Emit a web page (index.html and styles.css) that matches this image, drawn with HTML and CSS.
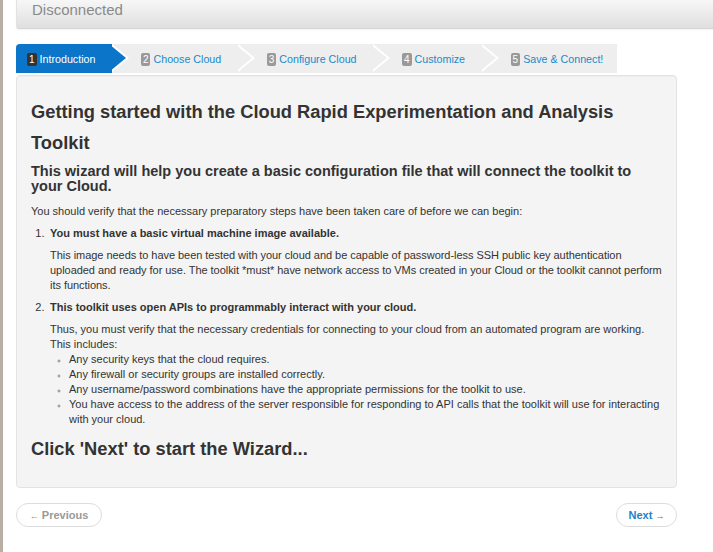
FILE: index.html
```
<!DOCTYPE html>
<html>
<head>
<meta charset="utf-8">
<link rel="stylesheet" href="styles.css">
</head>
<body>
<div class="page">
  <div class="topbar"><span class="status">Disconnected</span></div>
  <ul class="steps">
    <li class="step active"><span class="badge">1</span>Introduction</li>
    <li class="step"><span class="badge">2</span>Choose Cloud</li>
    <li class="step"><span class="badge">3</span>Configure Cloud</li>
    <li class="step"><span class="badge">4</span>Customize</li>
    <li class="step last"><span class="badge">5</span>Save &amp; Connect!</li>
  </ul>
  <div class="well">
    <h3>Getting started with the Cloud Rapid Experimentation and Analysis Toolkit</h3>
    <h4>This wizard will help you create a basic configuration file that will connect the toolkit to your Cloud.</h4>
    <p class="lead">You should verify that the necessary preparatory steps have been taken care of before we can begin:</p>
    <ol class="reqs">
      <li>
        <strong>You must have a basic virtual machine image available.</strong>
        <p class="snug">This image needs to have been tested with your cloud and be capable of password-less SSH public key authentication uploaded and ready for use. The toolkit *must* have network access to VMs created in your Cloud or the toolkit cannot perform its functions.</p>
      </li>
      <li>
        <strong>This toolkit uses open APIs to programmably interact with your cloud.</strong>
        <p class="tight">Thus, you must verify that the necessary credentials for connecting to your cloud from an automated program are working. This includes:</p>
        <ul class="subs">
          <li>Any security keys that the cloud requires.</li>
          <li>Any firewall or security groups are installed correctly.</li>
          <li>Any username/password combinations have the appropriate permissions for the toolkit to use.</li>
          <li>You have access to the address of the server responsible for responding to API calls that the toolkit will use for interacting with your cloud.</li>
        </ul>
      </li>
    </ol>
    <h3 class="cta">Click 'Next' to start the Wizard...</h3>
  </div>
  <div class="actions">
    <button class="btn prev"><span class="arr">&larr;</span> Previous</button>
    <button class="btn next">Next <span class="arr">&rarr;</span></button>
  </div>
</div>
</body>
</html>
```
FILE: styles.css
```
html, body {
  margin: 0;
  padding: 0;
  background: #fff;
}
body {
  font-family: "Liberation Sans", Arial, sans-serif;
  font-size: 11px;
  line-height: 15px;
  color: #333;
}
.page {
  border-left: 3px solid #b8aea3;
  min-height: 552px;
  box-sizing: border-box;
  padding-left: 13px;
  width: 713px;
}
.topbar {
  height: 28px;
  background: linear-gradient(#f7f7f7, #dfdfdf);
  border-bottom: 1px solid #d6d6d6;
  border-left: 1px solid #e2e2e2;
  border-bottom-left-radius: 3px;
  box-shadow: 0 1px 2px rgba(0,0,0,0.06);
  padding-left: 15px;
}
.status {
  font-size: 15px;
  line-height: 20px;
  color: #8a8a8a;
  display: inline-block;
}
.steps {
  list-style: none;
  margin: 15px 0 2px 0;
  padding: 0;
  display: inline-flex;
  vertical-align: top;
  height: 29px;
  background: #eee;
  border-radius: 4px 4px 0 0;
}
.step {
  position: relative;
  height: 29px;
  line-height: 31px;
  padding: 0 16.5px 0 29px;
  background: #eeeeee;
  color: #1a8ac8;
  font-size: 10.7px;
  white-space: nowrap;
}
.step:first-child {
  padding-left: 11px;
  border-radius: 4px 0 0 0;
}
.step.last { padding-right: 14px; }
.step::after {
  content: "";
  position: absolute;
  top: 0;
  right: -17px;
  border-top: 14.5px solid transparent;
  border-bottom: 14.5px solid transparent;
  border-left: 17px solid #fff;
  z-index: 1;
}
.step::before {
  content: "";
  position: absolute;
  top: 0;
  right: -14px;
  border-top: 14.5px solid transparent;
  border-bottom: 14.5px solid transparent;
  border-left: 17px solid #eeeeee;
  z-index: 2;
}
.step.last::after, .step.last::before { display: none; }
.step.active {
  background: #0b76c9;
  color: #fff;
}
.step.active::before { border-left-color: #0b76c9; }
.badge {
  display: inline-block;
  background: #999;
  color: #fff;
  font-size: 10px;
  line-height: 13px;
  padding: 0 2px;
  margin-right: 3px;
  border-radius: 2px;
}
.active .badge { background: #333; }
.well {
  width: 661px;
  box-sizing: border-box;
  min-height: 413px;
  background: #f4f4f4;
  border: 1px solid #e3e3e3;
  border-radius: 4px;
  padding: 14px 12px 12px 14px;
  box-shadow: inset 0 1px 1px rgba(0,0,0,0.03);
}
h3 {
  font-size: 18.3px;
  line-height: 31px;
  font-weight: bold;
  margin: 6px 0 0 0;
  color: #333;
}
h4 {
  font-size: 14.5px;
  line-height: 15px;
  font-weight: bold;
  margin: 6px 0 10px 0;
  color: #333;
}
p { margin: 0 0 7px 0; }
.reqs {
  margin: 0;
  padding-left: 19px;
}
.reqs > li::marker { content: counter(list-item) ".\2002"; }
.reqs > li > strong { display: block; margin-bottom: 7px; }
.reqs > li > p { margin: 0 0 7px 0; }
.reqs > li > p.snug { letter-spacing: -0.04px; }
.reqs > li > p.tight { margin-bottom: 0; }
.subs {
  list-style: circle;
  margin: 0;
  padding-left: 19px;
}
.subs li::marker { font-size: 7px; color: #888; }
.cta { margin-top: 6px; }
.actions {
  display: flex;
  justify-content: space-between;
  width: 661px;
  margin-top: 15px;
}
.btn {
  font-family: "Liberation Sans", Arial, sans-serif;
  font-size: 11px;
  font-weight: bold;
  height: 24px;
  box-sizing: border-box;
  white-space: nowrap;
  border: 1px solid #ddd;
  border-radius: 12px;
  background: #fff;
  padding: 0 10px;
}
.arr { font-size: 9px; font-weight: normal; }
.prev { color: #999; width: 86px; }
.next { color: #1a82c8; width: 61px; }
```
